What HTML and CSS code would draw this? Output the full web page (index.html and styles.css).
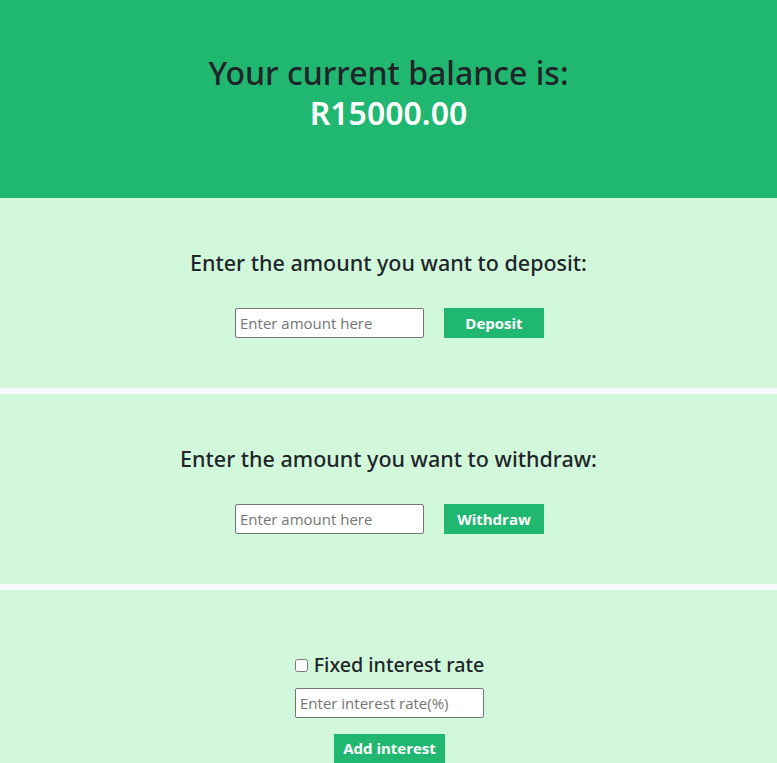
FILE: index.html
```html
<!DOCTYPE html>
<html lang="en">
<head>
<meta charset="utf-8">
<title>Bank</title>
<link rel="stylesheet" href="styles.css">
</head>
<body>
<header class="balance">
  <h1 class="balance-title">Your current balance is:</h1>
  <h1 class="balance-amount">R15000.00</h1>
</header>
<main class="panels">
  <section class="panel">
    <h4 class="panel-title">Enter the amount you want to deposit:</h4>
    <div class="row">
      <input class="amount" type="text" placeholder="Enter amount here">
      <button class="btn">Deposit</button>
    </div>
  </section>
  <section class="panel">
    <h4 class="panel-title">Enter the amount you want to withdraw:</h4>
    <div class="row">
      <input class="amount" type="text" placeholder="Enter amount here">
      <button class="btn">Withdraw</button>
    </div>
  </section>
  <section class="panel panel-interest">
    <label class="check-row"><input class="check" type="checkbox"> <span>Fixed interest rate</span></label>
    <input class="amount" type="text" placeholder="Enter interest rate(%)">
    <button class="btn btn-interest">Add interest</button>
  </section>
</main>
</body>
</html>
```
FILE: styles.css
```css
* { box-sizing: border-box; }
html, body { margin: 0; padding: 0; }
body {
  background: #f8f9fa;
  color: #212529;
  font-family: "Open Sans", "Noto Sans", sans-serif;
  font-size: 16px;
  line-height: 1.5;
  height: 763px;
  overflow: hidden;
}
.balance {
  background: #20b870;
  height: 198px;
  padding-top: 53px;
  text-align: center;
}
.balance-title, .balance-amount {
  margin: 0;
  font-family: "Noto Sans", "Open Sans", sans-serif;
  font-size: 32px;
  font-weight: 500;
  line-height: 40px;
}
.balance-amount { color: #ffffff; font-weight: 600; }
.panels {
  display: flex;
  flex-direction: column;
  gap: 6px;
}
.panel {
  background: #d2f8dc;
  height: 190px;
  padding-top: 51px;
  display: flex;
  flex-direction: column;
  align-items: center;
}
.panel-title {
  margin: 0 0 32px;
  font-family: "Noto Sans", "Open Sans", sans-serif;
  font-size: 21.5px;
  font-weight: 500;
  line-height: 27px;
}
.row {
  display: flex;
  align-items: center;
  gap: 20px;
  padding-left: 2px;
}
.amount {
  width: 189px;
  height: 30px;
  border: 1px solid #767676;
  border-radius: 2px;
  padding: 1px 4px;
  font-family: inherit;
  font-size: 15px;
  background: #fff;
  color: #212529;
}
.amount::placeholder { color: #757575; }
.btn {
  width: 100px;
  height: 30px;
  border: 0;
  background: #20b870;
  color: #fff;
  font-family: inherit;
  font-size: 15px;
  font-weight: 700;
  padding: 0;
}
.panel-interest {
  height: 173px;
  padding-top: 62px;
  padding-left: 2px;
}
.check-row {
  display: flex;
  align-items: center;
  gap: 6px;
  font-family: "Noto Sans", "Open Sans", sans-serif;
  font-size: 19.7px;
  line-height: 26px;
  font-weight: 500;
  margin-bottom: 10px;
}
.check {
  width: 13px;
  height: 13px;
  margin: 0;
}
.btn-interest {
  width: 111px;
  margin-top: 16px;
}
```
